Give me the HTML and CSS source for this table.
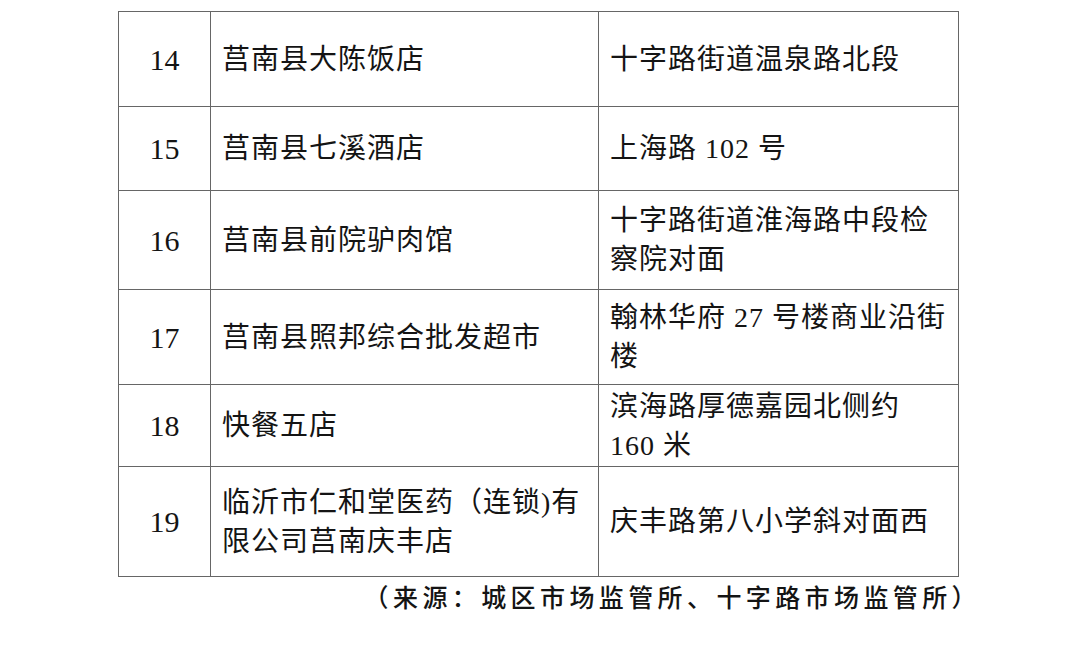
FILE: index.html
```html
<!DOCTYPE html>
<html lang="zh-CN">
<head>
<meta charset="utf-8">
<title>商户列表</title>
<link rel="stylesheet" href="styles.css">
</head>
<body>
<div class="page">
  <table class="list">
    <colgroup>
      <col class="c-no">
      <col class="c-name">
      <col class="c-addr">
    </colgroup>
    <tbody>
      <tr class="r14">
        <td class="no">14</td>
        <td>莒南县大陈饭店</td>
        <td>十字路街道温泉路北段</td>
      </tr>
      <tr class="r15">
        <td class="no">15</td>
        <td>莒南县七溪酒店</td>
        <td>上海路 102 号</td>
      </tr>
      <tr class="r16">
        <td class="no">16</td>
        <td>莒南县前院驴肉馆</td>
        <td>十字路街道淮海路中段检<br>察院对面</td>
      </tr>
      <tr class="r17">
        <td class="no">17</td>
        <td>莒南县照邦综合批发超市</td>
        <td>翰林华府 27 号楼商业沿街<br>楼</td>
      </tr>
      <tr class="r18">
        <td class="no">18</td>
        <td>快餐五店</td>
        <td>滨海路厚德嘉园北侧约<br>160 米</td>
      </tr>
      <tr class="r19">
        <td class="no">19</td>
        <td>临沂市仁和堂医药（连锁)有<br>限公司莒南庆丰店</td>
        <td>庆丰路第八小学斜对面西</td>
      </tr>
    </tbody>
  </table>
  <p class="source">（来源：城区市场监管所、十字路市场监管所）</p>
</div>
</body>
</html>
```

FILE: styles.css
```css
html, body {
  margin: 0;
  padding: 0;
  background: #ffffff;
}

.page {
  width: 1080px;
  height: 664px;
  padding: 11px 0 0 118px;
  box-sizing: border-box;
  display: flex;
  flex-direction: column;
  align-items: flex-start;
}

.list {
  border-collapse: collapse;
  width: 840px;
  table-layout: fixed;
  font-family: "Liberation Serif", "Noto Sans CJK SC", serif;
  font-size: 28px;
  color: #141414;
}

.c-no { width: 92px; }
.c-name { width: 388px; }
.c-addr { width: 360px; }

.list td {
  border: 1px solid #666666;
  padding: 0 8px 0 11px;
  vertical-align: middle;
  line-height: 39px;
  letter-spacing: 1px;
  white-space: nowrap;
}

.list td.no {
  text-align: center;
  padding: 0;
  letter-spacing: 0;
  font-size: 30px;
}

.r14 { height: 95px; }
.r15 { height: 84px; }
.r16 { height: 99px; }
.r17 { height: 95px; }
.r18 { height: 82px; }
.r19 { height: 110px; }

.source {
  margin: 2px 0 0 0;
  width: 863px;
  text-align: right;
  font-family: "Noto Sans CJK SC", sans-serif;
  font-weight: 500;
  font-size: 25px;
  letter-spacing: 4.4px;
  line-height: 34px;
  color: #141414;
}
```
